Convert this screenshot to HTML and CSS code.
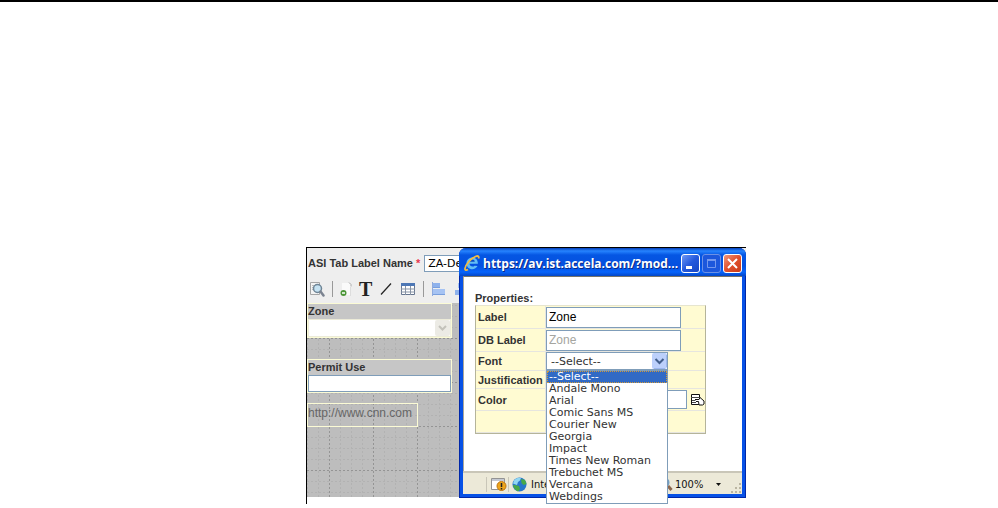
FILE: index.html
```html
<!DOCTYPE html>
<html lang="en">
<head>
    <meta charset="UTF-8">
    <meta name="viewport" content="width=device-width, initial-scale=1.0">
    <title>ASI Tab Designer</title>
    <link rel="stylesheet" href="styles.css">
</head>
<body>
    <main class="page">
        <div class="designer">
            <div class="workspace">
                <div class="tab-name">
                    <label for="tabName">ASI Tab Label Name <span class="required">*</span></label>
                    <input type="text" id="tabName" value="ZA-Default">
                </div>
                <div class="toolbar">
                    <button type="button" aria-label="Preview">
                        <svg width="16" height="16" viewBox="0 0 16 16"><path d="M1.500 1.500h9v12h-9z" fill="#f4f4f4" stroke="#a5a5a5"/><path d="M3 4.500h5M3 6.500h2M3 8.500h2" stroke="#bbb"/><circle cx="8.500" cy="7.500" r="4" fill="#c5e2f2" stroke="#6f8596" stroke-width="1.500"/><path d="M11.500 10.500l3 4" stroke="#7b8390" stroke-width="2.500" stroke-linecap="round"/></svg>
                    </button>
                    <span class="divider"></span>
                    <button type="button" aria-label="Add field">
                        <svg width="12" height="16" viewBox="0 0 12 16"><path d="M2 2h7l2 2v10H2z" fill="#fafafa"/><path d="M9 1.500l2 2v2" fill="none" stroke="#aaa"/><path d="M10.500 6v9" stroke="#ddd"/><circle cx="3.500" cy="12" r="3" fill="#4c9638"/><path d="M2 12h3" stroke="#fff" stroke-width="1.500"/></svg>
                    </button>
                    <button type="button" class="text-tool" aria-label="Add text">T</button>
                    <button type="button" aria-label="Add line">
                        <svg width="14" height="14" viewBox="0 0 14 14"><path d="M2 12.500L12 1.500" stroke="#222" stroke-width="1.200"/></svg>
                    </button>
                    <button type="button" aria-label="Add table">
                        <svg width="16" height="14" viewBox="0 0 16 14"><path d="M1.500 1.500h13v11h-13z" fill="#fff" stroke="#667690"/><path d="M1 1h14v3H1z" fill="#4d77b5"/><path d="M1 7h14M1 10h14M5.500 4v9M10.500 4v9" stroke="#8793a5"/></svg>
                    </button>
                    <span class="divider"></span>
                    <button type="button" aria-label="Align left">
                        <svg width="16" height="16" viewBox="0 0 16 16"><path d="M1.500 1v14" stroke="#8eaade"/><path d="M2 2h7v5H2z" fill="#8fb2ec"/><path d="M2 8h12v6H2z" fill="#a6c3f3"/><path d="M2 13.500h12M2 6.500h7" stroke="#799fdd"/></svg>
                    </button>
                    <button type="button" aria-label="Align center">
                        <svg width="16" height="16" viewBox="0 0 16 16"><path d="M4 2h8v5H4z" fill="#a6c3f3"/><path d="M1 9h14v5H1z" fill="#8fb2ec"/></svg>
                    </button>
                </div>
                <div class="canvas">
                    <div class="field">
                        <label for="zone">Zone</label>
                        <div class="select-box disabled-box">
                            <select id="zone" disabled><option></option></select>
                            <svg class="arrow" width="15" height="16" viewBox="0 0 15 16"><rect width="15" height="16" rx="2" fill="#ecebe5"/><path d="M4 6l3.500 3.500L11 6" fill="none" stroke="#c3c2bb" stroke-width="2"/></svg>
                        </div>
                    </div>
                    <div class="field">
                        <label for="permitUse">Permit Use</label>
                        <input type="text" id="permitUse">
                    </div>
                    <div class="link-box"><a href="#">http://www.cnn.com</a></div>
                </div>
            </div>

            <section class="popup">
                <header class="titlebar">
                    <svg width="18" height="18" viewBox="0 0 18 18"><path d="M14.500 12c-1 2-3 3.200-5.200 3.200-3.400 0-5.800-2.500-5.800-5.800s2.400-5.800 5.800-5.800c3.500 0 5.600 2.400 5.600 6.200H6.600c.1 1.700 1.200 2.800 2.900 2.800 1 0 1.600-.3 2-.9z" fill="#62bdf5"/><path d="M6.700 7.800h5.100c-.2-1.400-1.100-2.200-2.500-2.200s-2.400.8-2.600 2.200z" fill="#084ac6"/><path d="M15.500 4.500c.8-2.100-.3-3.200-3-2C8 4.500 2.500 10.500 2 14.500c-.2 1.800 1.200 2 3 1" fill="none" stroke="#f4bc43" stroke-width="1.800"/></svg>
                    <h1>https://av.ist.accela.com/?mod...</h1>
                    <div class="window-buttons">
                        <button type="button" class="minimize" aria-label="Minimize">
                            <svg width="17" height="17" viewBox="0 0 17 17"><path d="M4 11h6v3H4z" fill="#fff"/></svg>
                        </button>
                        <button type="button" class="maximize" aria-label="Maximize" disabled>
                            <svg width="17" height="17" viewBox="0 0 17 17"><path d="M4.500 4.500h8v8h-8z" fill="none" stroke="#7398ee"/><path d="M4 5h9" stroke="#7398ee" stroke-width="2"/></svg>
                        </button>
                        <button type="button" class="close" aria-label="Close">
                            <svg width="17" height="17" viewBox="0 0 17 17"><path d="M4 4l9 9M13 4l-9 9" stroke="#fff" stroke-width="2"/></svg>
                        </button>
                    </div>
                </header>
                <div class="popup-body">
                    <h2>Properties:</h2>
                    <table class="properties">
                        <tr class="tall">
                            <th><label for="propLabel">Label</label></th>
                            <td><input type="text" id="propLabel" value="Zone"></td>
                        </tr>
                        <tr class="tall">
                            <th><label for="propDb">DB Label</label></th>
                            <td><input type="text" id="propDb" value="Zone" disabled></td>
                        </tr>
                        <tr class="medium">
                            <th><label for="propFont">Font</label></th>
                            <td>
                                <div class="select-box font-box">
                                    <select id="propFont"><option>--Select--</option></select>
                                    <svg class="arrow" width="15" height="16" viewBox="0 0 15 16"><rect width="15" height="16" rx="2" fill="#bcd0fb"/><path d="M14.500 2v12M2 15.500h11" stroke="#9cb6ee"/><path d="M3.500 6l4 4 4-4" fill="none" stroke="#435f8c" stroke-width="2"/></svg>
                                    <ul class="options">
                                        <li class="selected">--Select--</li>
                                        <li>Andale Mono</li>
                                        <li>Arial</li>
                                        <li>Comic Sans MS</li>
                                        <li>Courier New</li>
                                        <li>Georgia</li>
                                        <li>Impact</li>
                                        <li>Times New Roman</li>
                                        <li>Trebuchet MS</li>
                                        <li>Vercana</li>
                                        <li>Webdings</li>
                                    </ul>
                                </div>
                            </td>
                        </tr>
                        <tr class="short">
                            <th>Justification</th>
                            <td></td>
                        </tr>
                        <tr class="normal">
                            <th><label for="propColor">Color</label></th>
                            <td>
                                <div class="color-row">
                                    <input type="text" id="propColor">
                                    <button type="button" aria-label="Pick color">
                                        <svg width="15" height="14" viewBox="0 0 15 14"><path d="M1.500 1.500h8v10h-8z" fill="#fff" stroke="#111"/><path d="M1 4.500h9M2 7.500h4M2 9.500h4" stroke="#444"/><path d="M5 6.500h4l1-2 4 3.500v3l-1.500 1H9l-.5-3.500H6" fill="#fff" stroke="#111"/></svg>
                                    </button>
                                </div>
                            </td>
                        </tr>
                        <tr class="normal">
                            <th></th>
                            <td></td>
                        </tr>
                    </table>
                </div>
                <footer class="statusbar">
                    <span class="status-gap"></span>
                    <svg width="17" height="16" viewBox="0 0 17 16"><path d="M1.500 2.500h13v11h-13z" fill="#fff" stroke="#939393"/><path d="M2 3h12v2H2z" fill="#c3c8d3"/><circle cx="11.500" cy="10" r="4.500" fill="#eda51c" stroke="#bd7410"/><path d="M11.500 7v4M11.500 12v1.500" stroke="#222" stroke-width="1.500"/></svg>
                    <span class="status-gap"></span>
                    <svg width="15" height="15" viewBox="0 0 15 15"><circle cx="7.500" cy="7.500" r="7" fill="#2876ca"/><path d="M2 3.500C4 1 7 .5 9 1L8 3.500 6 5 5 8 1 6.500z" fill="#91d7f3"/><path d="M9 2l4 1 1.500 4-3 1-2-2zM3 8l4 1 1 3-2 2.500C3 13 1.500 11 1 8z" fill="#48a947"/></svg>
                    <span class="zone-name">Internet</span>
                    <svg width="14" height="15" viewBox="0 0 14 15"><circle cx="5.500" cy="5.500" r="4" fill="#d7efff" stroke="#729ec3" stroke-width="2"/><path d="M9 9l3.500 4" stroke="#8c674d" stroke-width="3"/></svg>
                    <span class="zoom">100%</span>
                    <svg width="5" height="3" viewBox="0 0 5 3"><path d="M0 0h5L2.500 3z" fill="#111"/></svg>
                    <svg class="grip" width="11" height="11" viewBox="0 0 11 11"><path d="M8 0h2v2H8zM4 4h2v2H4zM8 4h2v2H8zM0 8h2v2H0zM4 8h2v2H4zM8 8h2v2H8z" fill="#bab5a2"/></svg>
                </footer>
            </section>
        </div>
    </main>
</body>
</html>
```
FILE: styles.css
```css
* {
    box-sizing: border-box;
}
body {
    margin: 0;
    background-color: #fff;
    border-top: 2px solid #000;
    font-family: "Liberation Sans", Arial, sans-serif;
    font-size: 11px;
    color: #333;
}
h1, h2, ul {
    margin: 0;
    padding: 0;
}
svg {
    display: block;
    flex: none;
}
button {
    padding: 0;
    border: none;
    background: none;
}
input, select {
    margin: 0;
    border: 1px solid #7f9db9;
    border-radius: 0;
    background-color: #fff;
    font-family: "Liberation Sans", Arial, sans-serif;
    font-size: 12px;
    color: #000;
}
.page {
    padding: 245px 0 4px 306px;
}
.designer {
    position: relative;
    max-width: 440px;
    padding-bottom: 7px;
    border-top: 1px solid #000;
    border-left: 1px solid #000;
}
.workspace {
    overflow: hidden;
    background-color: #eee;
}
.tab-name {
    display: flex;
    align-items: center;
    gap: 4px;
    height: 28px;
    padding: 2px 1px 0;
    font-weight: bold;
    white-space: nowrap;
}
.required {
    color: #e8364d;
}
.tab-name input {
    width: 120px;
    height: 17px;
    padding: 0 3px;
    font-family: "DejaVu Sans", sans-serif;
    font-size: 11px;
}
.toolbar {
    display: flex;
    align-items: center;
    gap: 7px;
    height: 27px;
    padding: 0 2px 2px;
    overflow: hidden;
}
.divider {
    width: 1px;
    height: 16px;
    background-color: #999;
}
.text-tool {
    font-family: "Liberation Serif", serif;
    font-size: 20px;
    font-weight: bold;
    line-height: 20px;
    color: #222;
}
.canvas {
    min-height: 194px;
    background-color: #bdbdbd;
    background-image:
        conic-gradient(from 270deg at 1px 2px, #949494 90deg, transparent 0),
        conic-gradient(from 270deg at 2px 1px, #949494 90deg, transparent 0),
        conic-gradient(from 270deg at 1px 2px, #b2b2b2 90deg, transparent 0),
        conic-gradient(from 270deg at 2px 1px, #b2b2b2 90deg, transparent 0);
    background-size: 44px 4px, 4px 44px, 11px 4px, 4px 11px;
    background-position: 22px 0, 0 35px, 0 0, 0 2px;
}
.field {
    width: 145px;
    margin-bottom: 21px;
    border: 1px solid #fbfbd5;
    background-color: #c6c6c6;
}
.field label {
    display: block;
    height: 15px;
    font-weight: bold;
    line-height: 15px;
}
.field input {
    display: block;
    width: 100%;
    height: 17px;
}
.select-box {
    position: relative;
}
.select-box select {
    display: block;
    width: 100%;
    appearance: none;
}
.arrow {
    position: absolute;
    top: 1px;
    right: 1px;
    pointer-events: none;
}
.disabled-box select {
    height: 18px;
    border-color: #ecebd8;
    background-color: #fff;
    opacity: 1;
}
.link-box {
    width: 111px;
    height: 24px;
    margin-top: -11px;
    border: 1px solid #fbfbd5;
    line-height: 18px;
}
.link-box a {
    font-size: 12px;
    color: #666;
    text-decoration: none;
}
.popup {
    position: absolute;
    top: 0;
    left: 152px;
    width: 287px;
    padding: 0 4px 4px;
    border-radius: 7px 7px 0 0;
    background-color: #0751e6;
    box-shadow: inset 1px -1px 0 #0027a8, inset -1px 0 0 #0027a8;
}
.titlebar {
    display: flex;
    align-items: center;
    height: 28px;
    margin: 0 -4px;
    padding: 2px 4px 0;
    border-radius: 7px 7px 0 0;
    background: linear-gradient(#0640ba, #2684ff 3px, #0556e3 7px, #0550df 18px, #0663fb 24px, #0446c5);
}
.titlebar h1 {
    flex: 1;
    padding-left: 2px;
    font-family: "Open Sans", sans-serif;
    font-size: 12px;
    font-weight: bold;
    color: #fff;
    text-shadow: 1px 1px 0 #0a2a86;
    white-space: nowrap;
}
.window-buttons {
    display: flex;
    gap: 2px;
}
.window-buttons button {
    width: 19px;
    height: 19px;
    border: 1px solid #fff;
    border-radius: 3px;
    background: linear-gradient(135deg, #6e98f5, #2459dd 50%, #1746c4);
}
.window-buttons .maximize {
    border-color: #6c91e5;
    background: #1c57dc;
}
.window-buttons .close {
    background: linear-gradient(135deg, #f0977b, #e1502c 50%, #c83a18);
}
.popup-body {
    height: 195px;
    padding: 15px 11px 0;
    border-top: 1px solid #77756b;
    border-left: 1px solid #aaa79a;
    background-color: #fff;
}
.popup-body h2 {
    height: 13px;
    font-size: 11px;
    line-height: 13px;
}
.properties {
    width: 231px;
    border: 1px solid #b5b49a;
    border-top-color: #e6e5cf;
    border-spacing: 0;
    background-color: #fffbd2;
}
.properties th {
    width: 71px;
    padding: 0 0 0 2px;
    border-right: 1px solid #e6e5df;
    border-bottom: 1px solid #e6e5df;
    text-align: left;
    white-space: nowrap;
}
.properties td {
    padding: 0;
    border-bottom: 1px solid #e6e5df;
}
.tall {
    height: 23px;
}
.normal {
    height: 22px;
}
.medium {
    height: 19px;
}
.short {
    height: 18px;
}
.properties input {
    display: block;
    width: 135px;
    height: 21px;
    padding: 0 2px;
}
.properties input:disabled {
    color: #a5a5a0;
}
.font-box {
    width: 122px;
}
.font-box select {
    height: 18px;
    padding: 0 4px;
    font-family: "DejaVu Sans", sans-serif;
    font-size: 11px;
    color: #333;
}
.options {
    position: absolute;
    top: 18px;
    left: 0;
    z-index: 1;
    width: 122px;
    border: 1px solid #7f9db9;
    background-color: #fff;
    font-family: "DejaVu Sans", sans-serif;
    font-size: 11px;
    line-height: 12px;
    list-style: none;
}
.options li {
    padding-left: 2px;
}
.options .selected {
    outline: 1px dotted #d29a3a;
    outline-offset: -1px;
    background-color: #316ac5;
    color: #fff;
}
.properties .color-row {
    display: flex;
    align-items: center;
    gap: 3px;
}
.properties .color-row input {
    width: 141px;
    height: 19px;
}
.statusbar {
    display: flex;
    align-items: center;
    height: 23px;
    padding-top: 1px;
    border-top: 2px solid #c9c6b8;
    background-color: #ece9d8;
    font-family: "DejaVu Sans Condensed", "DejaVu Sans", sans-serif;
    font-size: 11px;
    color: #111;
}
.status-gap {
    width: 1px;
    height: 15px;
    margin: 0 3px 0 1px;
    background-color: #c9c6b8;
}
.status-gap:first-child {
    margin-left: 23px;
}
.zone-name {
    width: 19px;
    margin-right: auto;
    padding-left: 4px;
    overflow: hidden;
}
.zoom {
    width: 43px;
    padding-left: 2px;
}
.grip {
    align-self: flex-end;
    margin-left: 10px;
}
```
